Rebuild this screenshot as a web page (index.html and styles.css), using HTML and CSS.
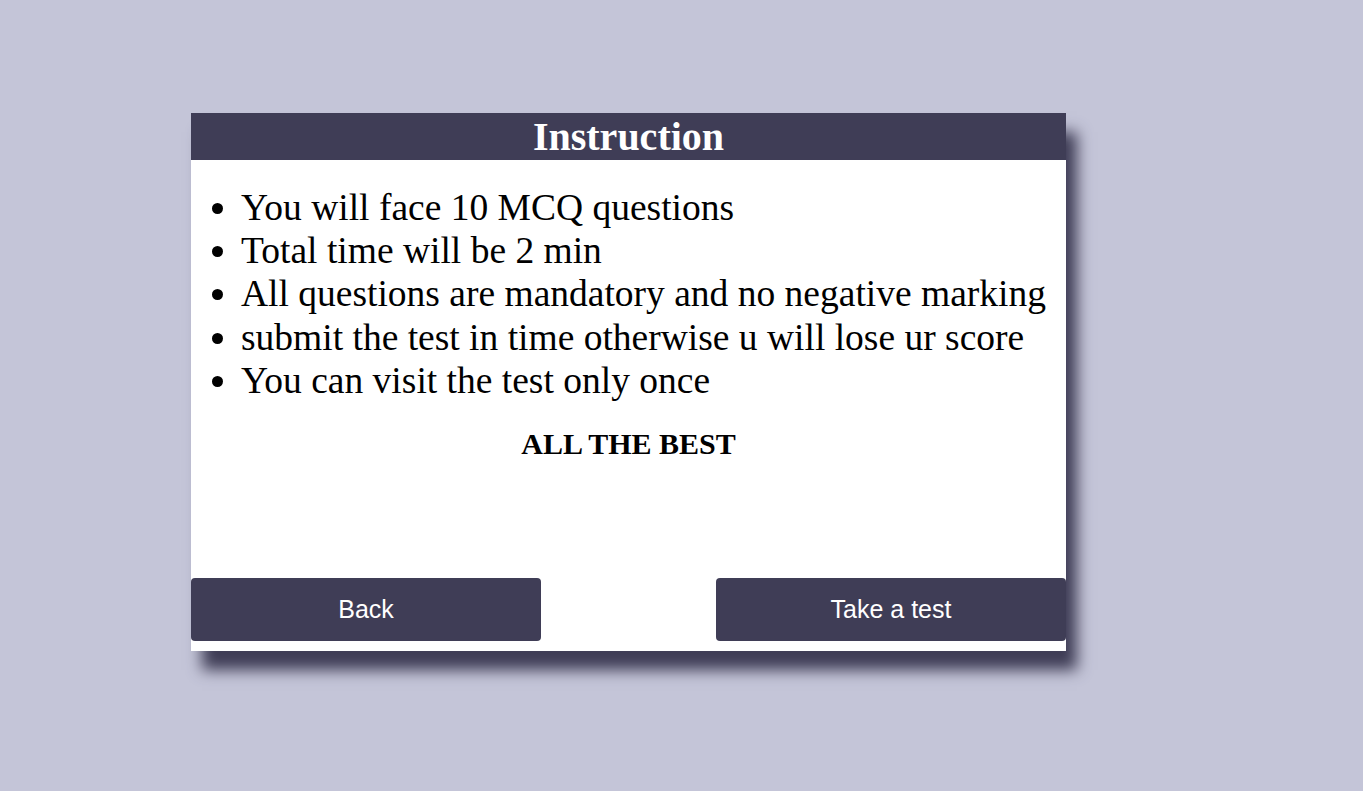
FILE: index.html
```html
<!DOCTYPE html>
<html>
<head>
<meta charset="utf-8">
<title>Instruction</title>
<link rel="stylesheet" href="styles.css">
</head>
<body>
  <div class="card">
    <h1 class="card-title">Instruction</h1>
    <div class="card-body">
      <ul class="rules">
        <li>You will face 10 MCQ questions</li>
        <li>Total time will be 2 min</li>
        <li>All questions are mandatory and no negative marking</li>
        <li>submit the test in time otherwise u will lose ur score</li>
        <li>You can visit the test only once</li>
      </ul>
      <h3 class="wish">ALL THE BEST</h3>
    </div>
    <div class="actions">
      <button class="btn">Back</button>
      <button class="btn">Take a test</button>
    </div>
  </div>
</body>
</html>
```

FILE: styles.css
```css
html, body {
  margin: 0;
  padding: 0;
}
body {
  background: #c4c5d8;
  font-family: "Liberation Serif", "Times New Roman", serif;
  min-height: 791px;
  padding-top: 113px;
  padding-left: 191px;
  box-sizing: border-box;
}
.card {
  width: 875px;
  height: 538px;
  background: #ffffff;
  box-shadow: 11px 19px 14px #3f3d56;
  display: flex;
  flex-direction: column;
}
.card-title {
  margin: 0;
  height: 47px;
  background: #3f3d56;
  color: #ffffff;
  font-size: 40px;
  font-weight: bold;
  text-align: center;
  line-height: 48px;
}
.card-body {
  padding: 10px 10px 0;
}
.rules {
  margin: 16px 0 0;
  padding-left: 40px;
  font-size: 37.5px;
  line-height: 43.2px;
  color: #000;
}
.wish {
  margin: 25px 0 0;
  text-align: center;
  font-size: 30px;
  line-height: 34px;
  font-weight: bold;
}
.actions {
  margin-top: auto;
  padding-bottom: 10px;
  display: flex;
  justify-content: space-between;
}
.btn {
  width: 350px;
  height: 63px;
  border: none;
  border-radius: 4px;
  background: #3f3d56;
  color: #ffffff;
  font-family: "Liberation Sans", Arial, sans-serif;
  font-size: 25px;
  cursor: pointer;
}
```
